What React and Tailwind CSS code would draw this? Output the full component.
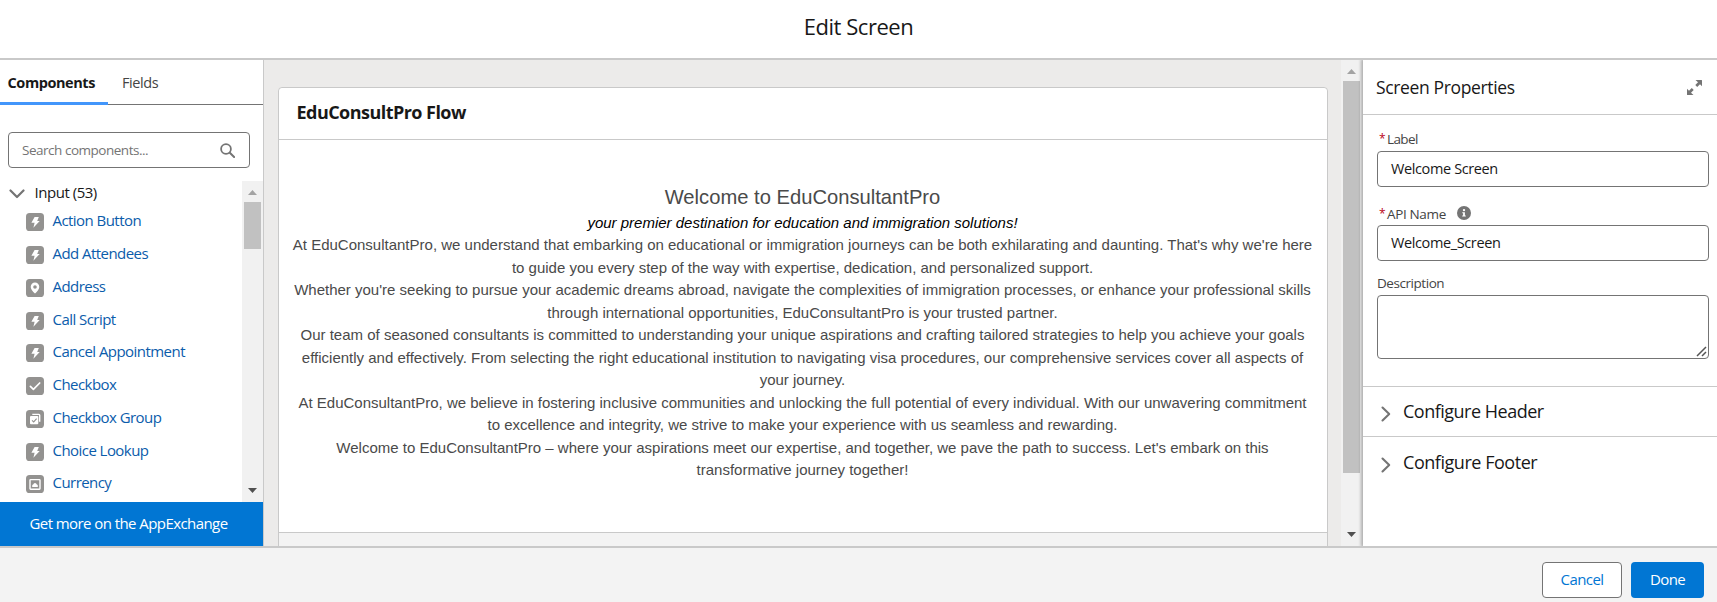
const boltPath = "M8.6 4h4.200l-1.600 3.900h2.500L7.400 14.800l1.200-5.100H5.400z";

function TileIcon({ kind }) {
  return (
    <svg className="h-[18px] w-[18px] shrink-0" viewBox="0 0 18 18">
      <rect width="18" height="18" rx="3.6" fill="#939290" />
      {kind === "bolt" && <path d={boltPath} fill="#fff" />}
      {kind === "pin" && (
        <path
          fillRule="evenodd"
          d="M9 3.6a4.3 4.3 0 0 0-4.3 4.3c0 2.6 2.6 4.6 3.7 6.2q.6.7 1.2 0c1.100-1.600 3.700-3.600 3.700-6.200A4.300 4.300 0 0 0 9 3.600zm0 2.600a1.800 1.800 0 1 1 0 3.600 1.800 1.800 0 0 1 0-3.600z"
          fill="#fff"
        />
      )}
      {kind === "check" && <path d="M4.400 9.300l3 3 6.300-6.300" fill="none" stroke="#fff" strokeWidth="1.700" strokeLinecap="round" strokeLinejoin="round" />}
      {kind === "group" && (
        <g>
          <path d="M6.300 4.400h6.600q.8 0 .8.8v6.600" fill="none" stroke="#fff" strokeWidth="1.400" />
          <rect x="4" y="6" width="8.300" height="8.300" rx="1" fill="#fff" />
          <path d="M6 10.300l1.700 1.600 2.900-3.200" fill="none" stroke="#939290" strokeWidth="1.100" />
        </g>
      )}
      {kind === "currency" && (
        <g>
          <rect x="4" y="4.600" width="10" height="9.600" rx=".6" fill="none" stroke="#fff" strokeWidth="1.400" />
          <path d="M6.200 11.900V10.400q.2-.9 1-.9.400-1.500 1.800-1.500t1.800 1.500q.8 0 1 .9v1.500z" fill="#fff" />
        </g>
      )}
    </svg>
  );
}

const items = [
  ["Action Button", "bolt"],
  ["Add Attendees", "bolt"],
  ["Address", "pin"],
  ["Call Script", "bolt"],
  ["Cancel Appointment", "bolt"],
  ["Checkbox", "check"],
  ["Checkbox Group", "group"],
  ["Choice Lookup", "bolt"],
  ["Currency", "currency"],
];

const paragraphs = [
  "At EduConsultantPro, we understand that embarking on educational or immigration journeys can be both exhilarating and daunting. That's why we're here to guide you every step of the way with expertise, dedication, and personalized support.",
  "Whether you're seeking to pursue your academic dreams abroad, navigate the complexities of immigration processes, or enhance your professional skills through international opportunities, EduConsultantPro is your trusted partner.",
  "Our team of seasoned consultants is committed to understanding your unique aspirations and crafting tailored strategies to help you achieve your goals efficiently and effectively. From selecting the right educational institution to navigating visa procedures, our comprehensive services cover all aspects of your journey.",
  "At EduConsultantPro, we believe in fostering inclusive communities and unlocking the full potential of every individual. With our unwavering commitment to excellence and integrity, we strive to make your experience with us seamless and rewarding.",
  "Welcome to EduConsultantPro – where your aspirations meet our expertise, and together, we pave the path to success. Let's embark on this transformative journey together!",
];

function ArrowUp() {
  return (
    <svg className="h-[5px] w-[9px]" viewBox="0 0 9 5">
      <path d="M0 5L4.500 0L9 5z" fill="#a3a3a3" />
    </svg>
  );
}

function ArrowDown() {
  return (
    <svg className="h-[5px] w-[9px]" viewBox="0 0 9 5">
      <path d="M0 0L4.500 5L9 0z" fill="#505050" />
    </svg>
  );
}

function ComponentsPanel() {
  return (
    <aside className="flex w-[264px] shrink-0 flex-col border-r border-[#c9c9c9] bg-white">
      <div className="flex h-[45px] shrink-0">
        <div className="flex w-[108px] items-center border-b-[3px] border-[#4296fb] pl-[7.5px] pt-[3px] text-[14.5px] font-bold tracking-[-0.42px] text-[#181818]">Components</div>
        <div className="flex grow items-center border-b border-[#747474] pl-3.5 pt-px text-[14.5px] tracking-[-0.4px] text-[#444]">Fields</div>
      </div>
      <div className="ml-2 mt-[27px] flex h-9 w-[242px] shrink-0 items-center justify-between rounded-[4px] border border-[#747474] pl-[13px] pr-3.5 text-[13.5px] tracking-[-0.48px] text-[#747474]">
        <span>Search components...</span>
        <svg className="mt-px h-[15px] w-[15px]" viewBox="0 0 15 15" fill="none" stroke="#747474">
          <circle cx="6" cy="6" r="4.900" strokeWidth="1.800" />
          <path d="M9.800 9.800l4.300 4.200" strokeWidth="2" strokeLinecap="round" />
        </svg>
      </div>
      <div className="mt-[13px] flex h-[321px] shrink-0 overflow-hidden">
        <div className="min-w-0 grow">
          <div className="flex h-6 items-center pl-[9px] text-[15px] tracking-[-0.47px] text-[#181818]">
            <svg className="mr-[9.5px] mt-0.5 h-[10px] w-4" viewBox="0 0 16 10" fill="none">
              <path d="M1.500 1.500L8 8L14.500 1.500" stroke="#747474" strokeWidth="2.200" strokeLinecap="round" strokeLinejoin="round" />
            </svg>
            <span className="-mt-0.5">Input (53)</span>
          </div>
          <ul>
            {items.map(([name, kind]) => (
              <li key={name} className="flex h-[32.75px] items-center gap-[8.5px] pl-[26px] pt-0.5 text-[15px] tracking-[-0.55px] text-[#0b5cab]">
                <TileIcon kind={kind} />
                <span className="-mt-[3.6px]">{name}</span>
              </li>
            ))}
          </ul>
        </div>
        <div className="flex w-[21px] shrink-0 flex-col items-center bg-[#f1f1f1]">
          <div className="flex h-[21px] items-center pt-0.5"><ArrowUp /></div>
          <div className="h-[47px] w-[17px] bg-[#c1c1c1]" />
          <div className="mt-auto flex h-[21px] items-center pb-0.5"><ArrowDown /></div>
        </div>
      </div>
      <div className="flex grow items-center justify-center bg-[#0176d3] pb-0.5 pr-1.5 text-[15px] tracking-[-0.57px] text-white">Get more on the AppExchange</div>
    </aside>
  );
}

function Canvas() {
  return (
    <main className="flex min-w-0 grow overflow-hidden bg-[#ecebea]">
      <div className="h-[486px] grow overflow-hidden pl-3.5 pr-[13px] pt-[27px]">
        <section className="h-[480px] rounded-[4px] border border-[#c9c9c9] bg-[#f3f3f3]">
          <h2 className="flex h-[52px] items-center rounded-t-[4px] border-b border-[#c9c9c9] bg-white pb-[3px] pl-[17.5px] text-[18px] font-bold tracking-[-0.54px] text-[#181818]">EduConsultPro Flow</h2>
          <div className="h-[393px] border-b border-[#c9c9c9] bg-white pl-3 pr-[13px] pt-[42px] text-center font-['Liberation_Sans',sans-serif] text-[15px] leading-[22.5px] text-[#4a4a4a]">
            <div className="text-[20.2px] leading-[30px]">Welcome to EduConsultantPro</div>
            <div className="h-[22px] italic text-black">your premier destination for education and immigration solutions!</div>
            {paragraphs.map((text) => (
              <p key={text}>{text}</p>
            ))}
          </div>
        </section>
      </div>
      <div className="flex w-[22px] shrink-0 flex-col items-center bg-[#f1f1f1]">
        <div className="flex h-[21px] items-center pr-0.5 pt-0.5"><ArrowUp /></div>
        <div className="mr-px h-[392px] w-[17px] bg-[#c1c1c1]" />
        <div className="mt-auto flex h-[21px] items-center pr-0.5 pb-0.5"><ArrowDown /></div>
      </div>
    </main>
  );
}

function Chevron() {
  return (
    <svg className="mt-[5px] h-4 w-[10px]" viewBox="0 0 10 16" fill="none">
      <path d="M1.500 1.500L8.200 8L1.500 14.500" stroke="#747474" strokeWidth="2.100" strokeLinecap="round" strokeLinejoin="round" />
    </svg>
  );
}

function PropertiesPanel() {
  return (
    <aside className="z-10 w-[354px] shrink-0 bg-white text-[#181818] shadow-[-1px_0_3px_1px_rgba(0,0,0,0.28)]">
      <div className="flex h-[55px] items-center justify-between border-b border-[#c9c9c9] pl-[13px] pr-[15px] text-[17.5px] tracking-[-0.36px]">
        <span>Screen Properties</span>
        <svg className="mt-px h-[15px] w-[15px]" viewBox="0 0 15 15" fill="#747474">
          <path d="M8.500 0H14.500Q15 0 15 .5V6.300L13 4.300L10.200 7L8.300 5.100L11 2.300z" />
          <path d="M6.500 15H.5Q0 15 0 14.500V8.700L2 10.700L4.800 8L6.700 9.900L4 12.700z" />
        </svg>
      </div>
      <div className="flex h-[272px] flex-col border-b border-[#c9c9c9] pl-3.5 pr-2 text-[13.5px] text-[#444]">
        <label className="mt-[13px] flex h-[23px] items-center pb-px pl-0.5 tracking-[-0.6px]">
          <span className="w-2 text-[12px] text-[#ba0517]">*</span>Label
        </label>
        <div className="flex h-9 items-center rounded-[4px] border border-[#747474] pl-[13px] text-[14.5px] tracking-[-0.38px] text-[#181818]">Welcome Screen</div>
        <label className="mt-4 flex h-[22px] items-center pl-0.5 tracking-[-0.35px]">
          <span className="w-2 text-[12px] text-[#ba0517]">*</span>API Name
          <svg className="-mt-[3px] ml-[11px] h-3.5 w-3.5" viewBox="0 0 14 14">
            <circle cx="7" cy="7" r="7" fill="#747474" />
            <circle cx="7" cy="4.100" r="1.200" fill="#fff" />
            <path d="M5.300 6.200h2.600v3.200h.9v1.100H5.200V9.400h.9V7.300h-.8z" fill="#fff" />
          </svg>
        </label>
        <div className="flex h-9 items-center rounded-[4px] border border-[#747474] pl-[13px] text-[14.5px] tracking-[-0.38px] text-[#181818]">Welcome_Screen</div>
        <label className="mt-[11px] flex h-[23px] items-center tracking-[-0.45px]">Description</label>
        <div className="flex h-16 items-end justify-end rounded-[4px] border border-[#747474] p-px">
          <svg className="h-[11px] w-[11px]" viewBox="0 0 11 11" stroke="#555" strokeWidth="1.500">
            <path d="M1 10L10 1M6 10L10 6" />
          </svg>
        </div>
      </div>
      <div className="flex h-[50px] items-center gap-3 border-b border-[#c9c9c9] pl-[18px] text-[18px] tracking-[-0.5px]">
        <Chevron />
        <span>Configure Header</span>
      </div>
      <div className="flex h-[51px] items-center gap-3 pl-[18px] text-[18px] tracking-[-0.46px]">
        <Chevron />
        <span>Configure Footer</span>
      </div>
    </aside>
  );
}

export default function App() {
  return (
    <div className="flex h-[602px] w-[1717px] flex-col overflow-hidden bg-white font-['Open_Sans',sans-serif]">
      <header className="flex h-[60px] shrink-0 items-center justify-center border-b-2 border-[#c9c9c9] pb-1.5 text-[22px] tracking-[-0.45px] text-[#181818]">Edit Screen</header>
      <div className="flex h-[486px] shrink-0 overflow-hidden">
        <ComponentsPanel />
        <Canvas />
        <PropertiesPanel />
      </div>
      <footer className="z-20 flex grow items-start justify-end gap-[9px] border-t-2 border-[#c9c9c9] bg-[#f3f3f3] pr-[13px] pt-3.5 text-[15px] tracking-[-0.6px]">
        <button className="h-9 w-20 rounded-[4px] border border-[#747474] bg-white pb-0.5 text-[#0176d3]">Cancel</button>
        <button className="h-9 w-[73px] rounded-[4px] bg-[#0176d3] pb-0.5 text-white">Done</button>
      </footer>
    </div>
  );
}
